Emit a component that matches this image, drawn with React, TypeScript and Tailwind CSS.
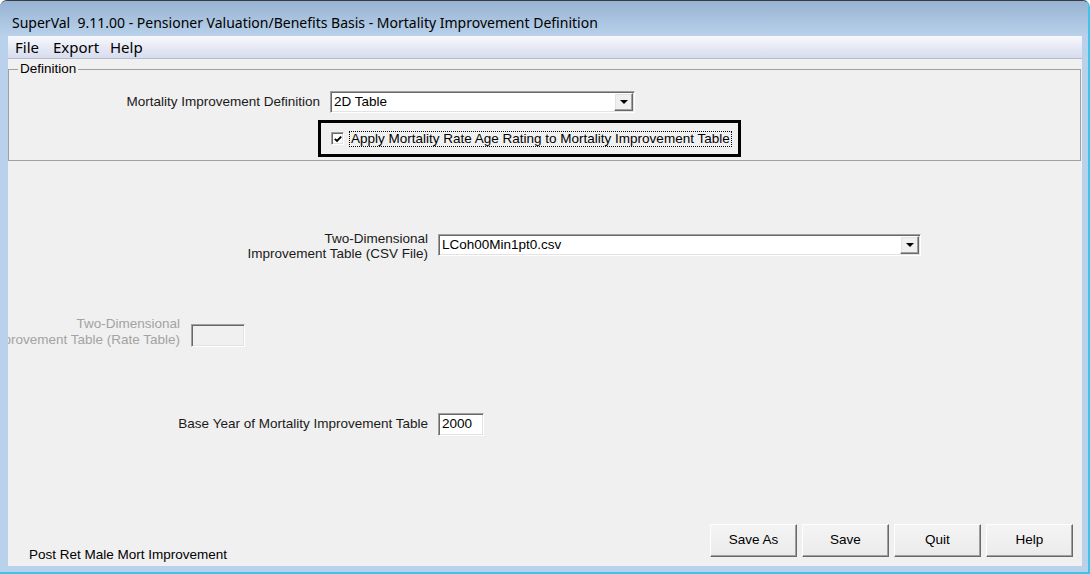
import React from "react"

const ui = { fontFamily: '"Liberation Sans", Arial, sans-serif' }
const chrome = { fontFamily: '"Noto Sans", "Open Sans", sans-serif' }

function DropArrow() {
  return (
    <div className="w-[19px] h-full bg-[#f0f0f0] border border-t-white border-l-white border-b-[#696969] border-r-[#696969] shadow-[inset_-1px_-1px_0_#a0a0a0,inset_1px_1px_0_#e3e3e3] flex items-center justify-center">
      <svg width="8" height="4" viewBox="0 0 8 4">
        <path d="M0 0h8L4 4z" fill="#000" />
      </svg>
    </div>
  )
}

function ComboBox({ value, width }: { value: string; width: string }) {
  return (
    <div
      className={`${width} h-[22px] bg-white border border-t-[#a0a0a0] border-l-[#a0a0a0] border-b-white border-r-white shadow-[inset_1px_1px_0_#696969,inset_-1px_-1px_0_#e3e3e3] flex items-stretch p-[1px]`}
    >
      <div className="flex-1 flex items-center pl-[2px] text-black">{value}</div>
      <DropArrow />
    </div>
  )
}

function TextBox({ value, width, disabled }: { value?: string; width: string; disabled?: boolean }) {
  return (
    <div
      className={`${width} h-[23px] ${disabled ? "bg-[#f0f0f0]" : "bg-white"} border border-t-[#a0a0a0] border-l-[#a0a0a0] border-b-white border-r-white shadow-[inset_1px_1px_0_#696969,inset_-1px_-1px_0_#e3e3e3] flex items-center pl-[3px] text-black`}
    >
      {value}
    </div>
  )
}

function Button({ label }: { label: string }) {
  return (
    <button className="w-[87px] h-[33px] bg-gradient-to-b from-[#f4f4f4] to-[#ebebeb] border border-t-white border-l-white border-b-[#696969] border-r-[#696969] shadow-[inset_-1px_-1px_0_#a0a0a0] text-black">
      {label}
    </button>
  )
}

export default function App() {
  return (
    <div className="w-[1090px] h-[574px] bg-[#b9d1ea] flex flex-col overflow-hidden rounded-t-[7px] border-t border-t-[#3c3c3c] border-r-2 border-r-[#3fc4ec] border-b-2 border-b-[#3fc4ec]" style={ui}>
      {/* title bar */}
      <div className="h-[35px] shrink-0 bg-gradient-to-b from-[#97b3d3] to-[#b9d1ea] flex items-center pl-[12px] pt-[8px] text-[14px] text-black whitespace-pre" style={chrome}>
        SuperVal  9.11.00 - Pensioner Valuation/Benefits Basis - Mortality Improvement Definition
      </div>

      <div className="flex-1 flex flex-col pl-[8px] pr-[6px] pb-[6px] min-h-0">
        {/* menu */}
        <div className="h-[23px] shrink-0 bg-gradient-to-b from-[#f8f9fc] via-[#e7eaf5] to-[#d7dcee] border-b border-b-[#b6bccc] flex items-center pl-[7px] text-[15px] text-black" style={chrome}>
          <span className="w-[38px]">File</span>
          <span className="w-[57px]">Export</span>
          <span>Help</span>
        </div>

        {/* client area */}
        <div className="flex-1 bg-[#f0f0f0] flex flex-col overflow-hidden text-[13.5px] text-[#1a1a1a]">
          <fieldset className="mt-[3px] mr-[1px] h-[99px] border border-[#a0a0a0] flex flex-col">
            <legend className="ml-[9px] px-[2px] leading-[14px] text-black">Definition</legend>
            <div className="mt-[15px] flex items-center">
              <div className="w-[311px] text-right">Mortality Improvement Definition</div>
              <div className="ml-[10px]">
                <ComboBox value="2D Table" width="w-[305px]" />
              </div>
            </div>
            <div className="mt-[7px] ml-[309px] w-[423px] h-[37px] border-[3px] border-black flex items-center pl-[10px]">
              <div className="w-[13px] h-[13px] bg-white border border-t-[#a0a0a0] border-l-[#a0a0a0] border-b-white border-r-white shadow-[inset_1px_1px_0_#696969,inset_-1px_-1px_0_#e3e3e3] flex items-center justify-center">
                <svg width="8" height="8" viewBox="0 0 8 8">
                  <path d="M0.8 3.8 L3 6 L7.2 1.6" fill="none" stroke="#000" strokeWidth="1.9" />
                </svg>
              </div>
              <div className="ml-[5px] border border-dotted border-black px-[1px] leading-[14px] text-black whitespace-nowrap">
                Apply Mortality Rate Age Rating to Mortality Improvement Table
              </div>
            </div>
          </fieldset>

          <div className="mt-[73px] h-[22px] flex items-start">
            <div className="w-[420px] -mt-[3px] text-right leading-[15px]">
              Two-Dimensional
              <br />
              Improvement Table (CSV File)
            </div>
            <div className="ml-[10px]">
              <ComboBox value="LCoh00Min1pt0.csv" width="w-[483px]" />
            </div>
          </div>

          <div className="mt-[68px] h-[23px] flex items-start">
            <div className="w-[172px] -mt-[8px] flex justify-end overflow-hidden">
              <div className="text-right leading-[16px] whitespace-nowrap text-[#a3a3a3]">
                Two-Dimensional
                <br />
                Improvement Table (Rate Table)
              </div>
            </div>
            <div className="ml-[11px]">
              <TextBox width="w-[54px]" disabled />
            </div>
          </div>

          <div className="mt-[66px] flex items-center">
            <div className="w-[420px] text-right">Base Year of Mortality Improvement Table</div>
            <div className="ml-[10px]">
              <TextBox value="2000" width="w-[46px]" />
            </div>
          </div>

          <div className="mt-auto flex items-end justify-between pl-[21px] pr-[9px] pb-[4px]">
            <div className="leading-[15px] text-black">Post Ret Male Mort Improvement</div>
            <div className="flex gap-[5px] mb-[5px]">
              <Button label="Save As" />
              <Button label="Save" />
              <Button label="Quit" />
              <Button label="Help" />
            </div>
          </div>
        </div>
      </div>
    </div>
  )
}
